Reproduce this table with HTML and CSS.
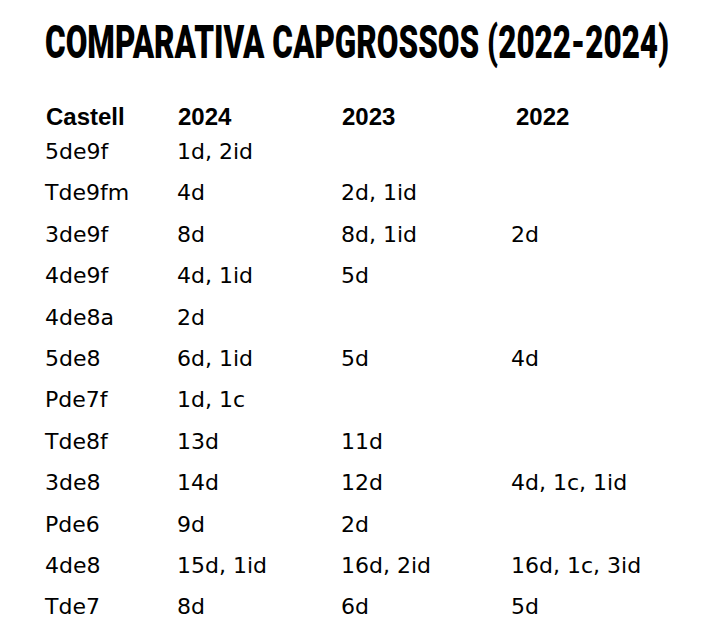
FILE: index.html
```html
<!DOCTYPE html>
<html lang="ca">
<head>
<meta charset="utf-8">
<title>Comparativa Capgrossos (2022-2024)</title>
<link rel="stylesheet" href="styles.css">
</head>
<body>
<main class="page">
  <h1 class="title"><span class="title-text">COMPARATIVA CAPGROSSOS (2022-2024)</span></h1>
  <div class="grid">
    <div class="th">Castell</div><div class="th">2024</div><div class="th">2023</div><div class="th th-last">2022</div>
    <div class="td">5de9f</div><div class="td">1d, 2id</div><div class="td"></div><div class="td"></div>
    <div class="td">Tde9fm</div><div class="td">4d</div><div class="td">2d, 1id</div><div class="td"></div>
    <div class="td">3de9f</div><div class="td">8d</div><div class="td">8d, 1id</div><div class="td">2d</div>
    <div class="td">4de9f</div><div class="td">4d, 1id</div><div class="td">5d</div><div class="td"></div>
    <div class="td">4de8a</div><div class="td">2d</div><div class="td"></div><div class="td"></div>
    <div class="td">5de8</div><div class="td">6d, 1id</div><div class="td">5d</div><div class="td">4d</div>
    <div class="td">Pde7f</div><div class="td">1d, 1c</div><div class="td"></div><div class="td"></div>
    <div class="td">Tde8f</div><div class="td">13d</div><div class="td">11d</div><div class="td"></div>
    <div class="td">3de8</div><div class="td">14d</div><div class="td">12d</div><div class="td">4d, 1c, 1id</div>
    <div class="td">Pde6</div><div class="td">9d</div><div class="td">2d</div><div class="td"></div>
    <div class="td">4de8</div><div class="td">15d, 1id</div><div class="td">16d, 2id</div><div class="td">16d, 1c, 3id</div>
    <div class="td">Tde7</div><div class="td">8d</div><div class="td">6d</div><div class="td">5d</div>
  </div>
</main>
</body>
</html>
```

FILE: styles.css
```css
html, body {
  margin: 0;
  padding: 0;
  background: #ffffff;
  color: #000000;
}

.page {
  padding: 19px 0 0 45px;
}

.title {
  margin: 0;
  box-sizing: border-box;
  height: 46px;
  padding-top: 12.5px;
  font-family: Roboto, "Liberation Sans", sans-serif;
  font-weight: 900;
  font-size: 31.45px;
  line-height: 31.45px;
}

.title-text {
  display: block;
  white-space: nowrap;
  transform: scaleY(1.476);
  transform-origin: 0 26.46px;
}

.grid {
  margin-top: 37px;
  display: grid;
  grid-template-columns: 132px 164px 170px 1fr;
}

.th {
  font-family: "Liberation Sans", Arial, sans-serif;
  font-weight: 700;
  font-size: 24px;
  line-height: 29px;
  padding-left: 1px;
}

.th-last {
  padding-left: 5px;
}

.td {
  font-family: "DejaVu Sans", sans-serif;
  font-size: 22px;
  line-height: 41.4px;
  white-space: nowrap;
}
```
